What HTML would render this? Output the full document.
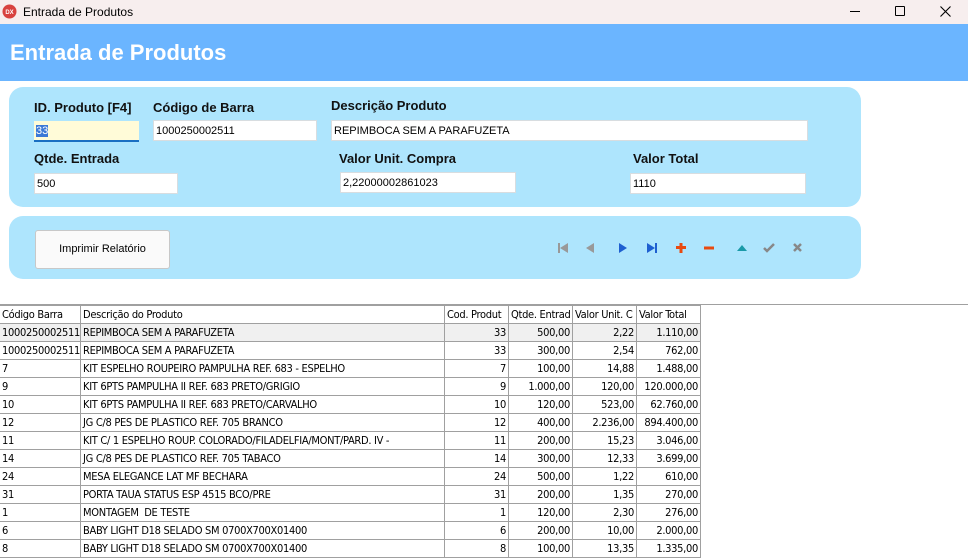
<!DOCTYPE html>
<html><head><meta charset="utf-8"><style>
*{margin:0;padding:0;box-sizing:border-box}
body{width:968px;height:546px;overflow:hidden;background:#fff;font-family:"Liberation Sans",sans-serif;position:relative}
.tb{position:absolute;left:0;top:0;width:968px;height:24px;background:#f7eeee;font-size:12px}
.hd{position:absolute;left:0;top:24px;width:968px;height:57px;background:#6bb5ff;color:#fff;font:bold 22px "Liberation Sans",sans-serif;padding:16px 0 0 10px}
.p{position:absolute;left:9px;width:852px;background:#aee5fd;border-radius:14px}
.lb{position:absolute;font:bold 13px "Liberation Sans",sans-serif;color:#111}
.in{position:absolute;height:21px;background:#fff;border:1px solid #d8dde0;font-size:11px;padding:4px 2px;color:#000}
.btn{position:absolute;left:26px;top:14px;width:135px;height:39px;background:#fafafa;border:1px solid #c8c8c8;border-radius:3px;font-size:11px;text-align:center;line-height:37px}
table{position:absolute;top:305px;left:-1px;width:701px;table-layout:fixed;border-collapse:collapse;font-size:11px;font-family:"DejaVu Sans Condensed","Liberation Sans Narrow","Liberation Sans",sans-serif}
td{height:18px;border:1px solid #a0a0a0;border-top:none;padding:0 2px;white-space:nowrap;overflow:hidden;letter-spacing:-0.3px}
td.r{text-align:right}
tr.h td{border-top:1px solid #a0a0a0}
.line{position:absolute;left:0;top:304px;width:968px;height:1px;background:#a0a0a0}
</style></head><body>
<div class="tb">
<svg style="position:absolute;left:2px;top:4px" width="15" height="15"><circle cx="7.5" cy="7.5" r="7" fill="#d8423f"/><text x="7.5" y="10" font-size="6" font-weight="bold" fill="#fff" text-anchor="middle" font-family="Liberation Sans">DX</text></svg>
<span style="position:absolute;left:23px;top:5px">Entrada de Produtos</span>
<div style="position:absolute;left:850px;top:11px;width:10px;height:1px;background:#000"></div>
<div style="position:absolute;left:895px;top:6px;width:10px;height:10px;border:1px solid #000;border-radius:1px"></div>
<svg style="position:absolute;left:940px;top:6px" width="11" height="11"><path d="M0.5 0.5L10.5 10.5M10.5 0.5L0.5 10.5" stroke="#000" stroke-width="1.1"/></svg>
</div>
<div class="hd">Entrada de Produtos</div>
<div class="p" style="top:87px;height:120px">
<div class="lb" style="left:25px;top:13px">ID. Produto [F4]</div>
<div class="lb" style="left:144px;top:13px">Código de Barra</div>
<div class="lb" style="left:322px;top:11px">Descrição Produto</div>
<div class="in" style="left:25px;top:34px;width:105px;background:#fffbd8;border:none;border-bottom:2px solid #1a6fc2"><span style="background:#3b78d6;color:#fff">33</span></div>
<div class="in" style="left:144px;top:33px;width:164px">1000250002511</div>
<div class="in" style="left:322px;top:33px;width:477px">REPIMBOCA SEM A PARAFUZETA</div>
<div class="lb" style="left:25px;top:64px">Qtde. Entrada</div>
<div class="lb" style="left:330px;top:64px">Valor Unit. Compra</div>
<div class="lb" style="left:624px;top:64px">Valor Total</div>
<div class="in" style="left:25px;top:86px;width:144px">500</div>
<div class="in" style="left:331px;top:85px;width:176px">2,22000002861023</div>
<div class="in" style="left:621px;top:86px;width:176px">1110</div>
</div>
<div class="p" style="top:216px;height:63px">
<div class="btn">Imprimir Relatório</div>
<svg style="position:absolute;left:540px;top:22px" width="260" height="20">
<g fill="#999"><rect x="9" y="5" width="2" height="10"/><path d="M11 10L19 5V15Z"/><path d="M37 10L45 5V15Z"/></g>
<g fill="#1e5fd0"><path d="M70 5L78 10L70 15Z"/><path d="M98 5L106 10L98 15Z"/><rect x="106" y="5" width="2" height="10"/></g>
<g fill="#e84a10"><rect x="127" y="8" width="10" height="3"/><rect x="130.5" y="5" width="3" height="10"/><rect x="155" y="8.5" width="10" height="3"/></g>
<path d="M188 13L193 7L198 13Z" fill="#1a9aa8"/>
<path d="M215 10L218 13L225 6" stroke="#888" stroke-width="2.5" fill="none"/>
<path d="M245 6L252 13M252 6L245 13" stroke="#888" stroke-width="2.5"/>
</svg>
</div>
<div class="line"></div>
<table>
<colgroup><col style="width:81px"><col style="width:364px"><col style="width:64px"><col style="width:64px"><col style="width:64px"><col style="width:64px"></colgroup>
<tr class="h"><td>Código Barra</td><td>Descrição do Produto</td><td>Cod. Produt</td><td>Qtde. Entrad</td><td>Valor Unit. C</td><td>Valor Total</td></tr>
<tr style="background:#f0f0f0"><td>1000250002511</td><td>REPIMBOCA SEM A PARAFUZETA</td><td class="r">33</td><td class="r">500,00</td><td class="r">2,22</td><td class="r">1.110,00</td></tr>
<tr><td>1000250002511</td><td>REPIMBOCA SEM A PARAFUZETA</td><td class="r">33</td><td class="r">300,00</td><td class="r">2,54</td><td class="r">762,00</td></tr>
<tr><td>7</td><td>KIT ESPELHO ROUPEIRO PAMPULHA REF. 683 - ESPELHO</td><td class="r">7</td><td class="r">100,00</td><td class="r">14,88</td><td class="r">1.488,00</td></tr>
<tr><td>9</td><td>KIT 6PTS PAMPULHA II REF. 683 PRETO/GRIGIO</td><td class="r">9</td><td class="r">1.000,00</td><td class="r">120,00</td><td class="r">120.000,00</td></tr>
<tr><td>10</td><td>KIT 6PTS PAMPULHA II REF. 683 PRETO/CARVALHO</td><td class="r">10</td><td class="r">120,00</td><td class="r">523,00</td><td class="r">62.760,00</td></tr>
<tr><td>12</td><td>JG C/8 PES DE PLASTICO REF. 705 BRANCO</td><td class="r">12</td><td class="r">400,00</td><td class="r">2.236,00</td><td class="r">894.400,00</td></tr>
<tr><td>11</td><td>KIT C/ 1 ESPELHO ROUP. COLORADO/FILADELFIA/MONT/PARD. IV -</td><td class="r">11</td><td class="r">200,00</td><td class="r">15,23</td><td class="r">3.046,00</td></tr>
<tr><td>14</td><td>JG C/8 PES DE PLASTICO REF. 705 TABACO</td><td class="r">14</td><td class="r">300,00</td><td class="r">12,33</td><td class="r">3.699,00</td></tr>
<tr><td>24</td><td>MESA ELEGANCE LAT MF BECHARA</td><td class="r">24</td><td class="r">500,00</td><td class="r">1,22</td><td class="r">610,00</td></tr>
<tr><td>31</td><td>PORTA TAUA STATUS ESP 4515 BCO/PRE</td><td class="r">31</td><td class="r">200,00</td><td class="r">1,35</td><td class="r">270,00</td></tr>
<tr><td>1</td><td>MONTAGEM&nbsp; DE TESTE</td><td class="r">1</td><td class="r">120,00</td><td class="r">2,30</td><td class="r">276,00</td></tr>
<tr><td>6</td><td>BABY LIGHT D18 SELADO SM 0700X700X01400</td><td class="r">6</td><td class="r">200,00</td><td class="r">10,00</td><td class="r">2.000,00</td></tr>
<tr><td>8</td><td>BABY LIGHT D18 SELADO SM 0700X700X01400</td><td class="r">8</td><td class="r">100,00</td><td class="r">13,35</td><td class="r">1.335,00</td></tr>
</table>
</body></html>
